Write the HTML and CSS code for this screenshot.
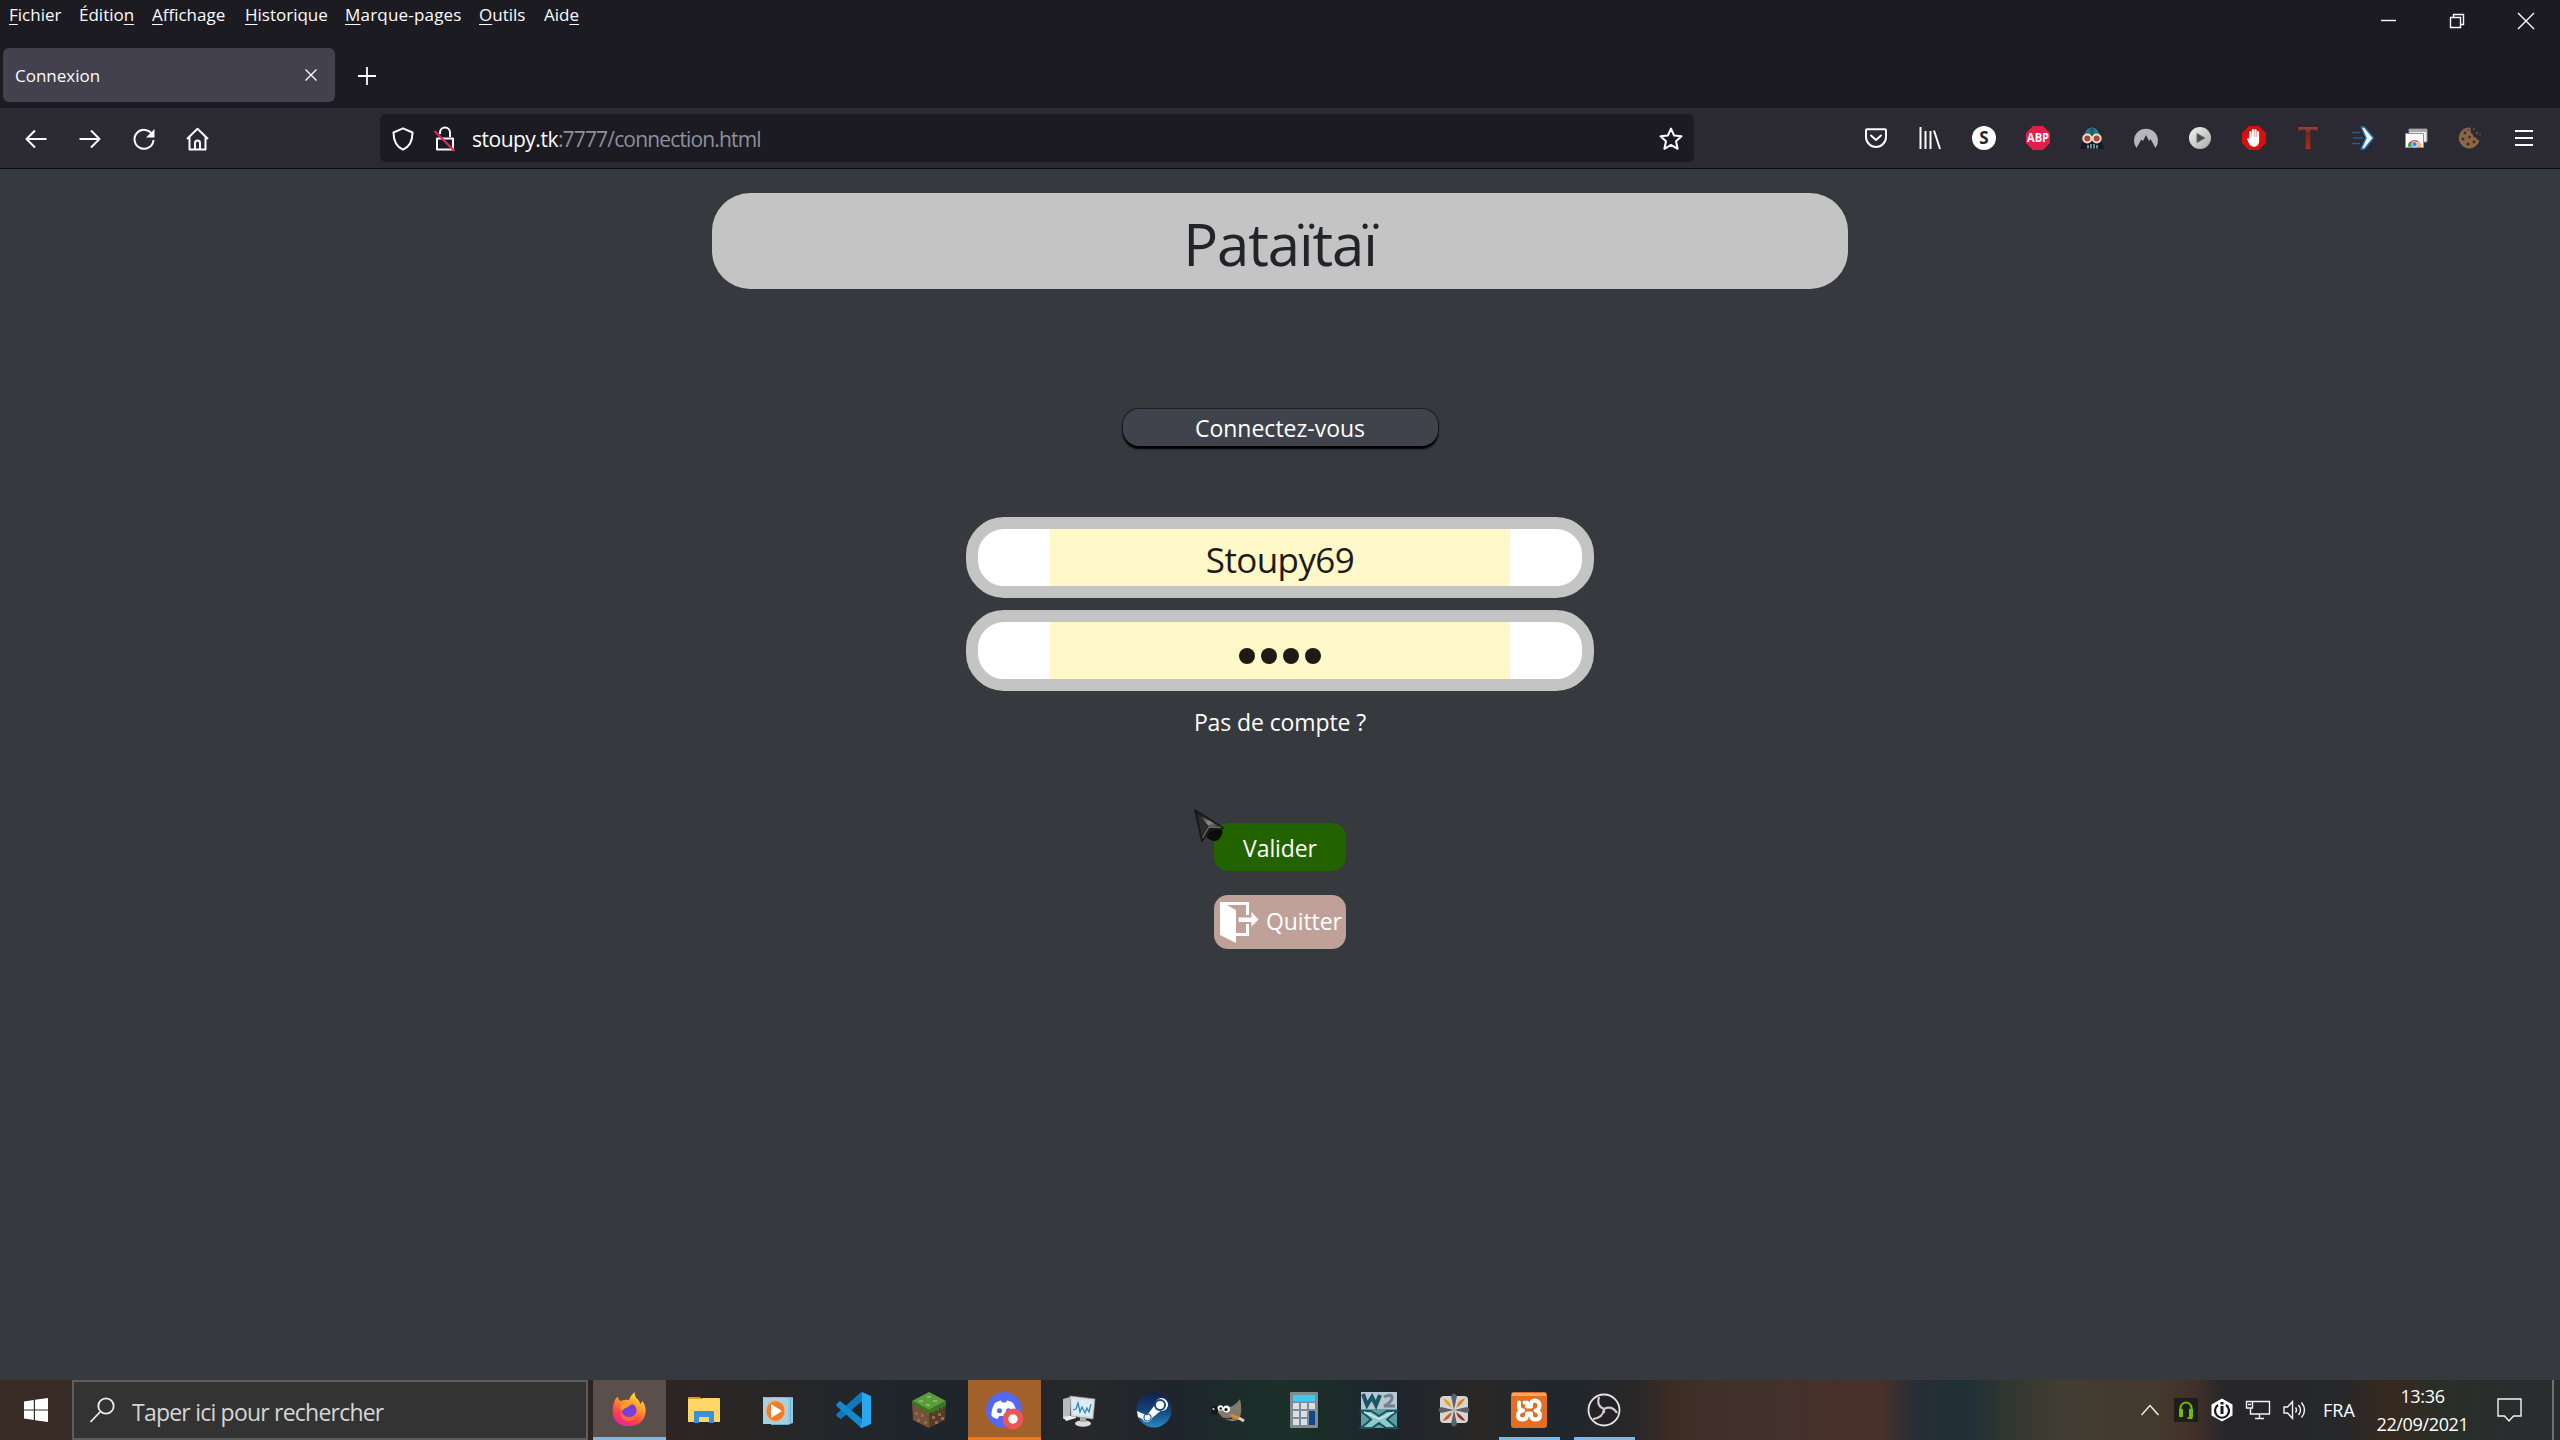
FILE: index.html
```html
<!DOCTYPE html>
<html lang="fr">
<head>
<meta charset="utf-8">
<title>Connexion</title>
<link rel="stylesheet" href="styles.css">
</head>
<body>
<div class="desktop">
  <header class="titlebar">
    <div class="title-row">
      <nav class="menubar">
        <span><u>F</u>ichier</span><span>Éditio<u>n</u></span><span><u>A</u>ffichage</span><span><u>H</u>istorique</span><span class="wide"><u>M</u>arque-pages</span><span><u>O</u>utils</span><span>Aid<u>e</u></span>
      </nav>
      <div class="window-controls">
        <svg width="18" height="18" viewBox="0 0 18 18"><path d="M2 8.500h15"/></svg>
        <svg width="18" height="18" viewBox="0 0 18 18"><path d="M2.500 5.500h10v10h-10zM5.500 5.500v-3h10v10h-3"/></svg>
        <svg width="18" height="18" viewBox="0 0 18 18"><path d="M1 1l16 16M17 1L1 17"/></svg>
      </div>
    </div>
    <div class="tab-row">
      <div class="tab"><span>Connexion</span><svg width="14" height="14" viewBox="0 0 14 14"><path d="M1.500 1.500l11 11M12.500 1.500l-11 11"/></svg></div>
      <svg class="new-tab" width="20" height="20" viewBox="0 0 20 20"><path d="M10 1v18M1 10h18"/></svg>
    </div>
  </header>

  <div class="toolbar">
    <div class="nav-buttons">
      <svg viewBox="0 0 24 24"><path d="M22.500 12H2.500M11 3.500L2.500 12l8.500 8.500"/></svg>
      <svg viewBox="0 0 24 24"><path d="M1.500 12h20M13 3.500l8.500 8.500-8.500 8.500"/></svg>
      <svg viewBox="0 0 24 24"><path d="M20.500 8A9.500 9.500 0 1 0 21.500 13"/><path d="M22.500 2v8.500H14z" fill="#fbfbfe" stroke="none"/></svg>
      <svg viewBox="0 0 24 24"><path d="M1 12L11.500 1.800 22 12M3.500 10v12.500h16V10M9 22v-6a2.500 2.500 0 0 1 5 0v6"/></svg>
    </div>
    <div class="urlbar">
      <svg class="shield" viewBox="0 0 24 24"><path d="M12 1.300L21.500 5.500c0 8-2.500 14-9.500 17.200C5 19.500 2.500 13.500 2.500 5.500z"/></svg>
      <svg class="lock" viewBox="0 0 24 24"><path d="M7 7V5.500a5 5 0 0 1 10 0V10M4 11.500h16v11H4z"/><path d="M1.500 4l20 20" stroke="#e22850" stroke-width="2.200"/></svg>
      <span class="url"><b>stoupy.tk</b>:7777/connection.html</span>
      <svg class="star" viewBox="0 0 24 24"><path d="M12 1.600l3.100 6.900 7.400.8-5.500 5 1.600 7.500-6.600-3.900-6.600 3.900L7 14.300l-5.500-5 7.400-.8z"/></svg>
    </div>
    <div class="extensions">
      <svg viewBox="0 0 24 24"><path d="M3 3.200h18q1 0 1 1V11a10 10 0 0 1-20 0V4.200q0-1 1-1zM7 9.500l5 4.500 5-4.500" stroke-linecap="round"/></svg>
      <svg viewBox="0 0 24 24"><path d="M2.500 1v22M7.500 5v18M12.500 5v18M16 4.500l6 18.500"/></svg>
      <svg viewBox="0 0 24 24"><circle cx="12" cy="12" r="12" fill="#fff" stroke="none"/><text x="12" y="17.800" class="glyph-s">S</text></svg>
      <svg viewBox="0 0 24 24"><path d="M7 0h10l7 7v10l-7 7H7l-7-7V7z" fill="#e41e4a" stroke="none"/><text x="12" y="16.200" class="glyph-abp" textLength="22" lengthAdjust="spacingAndGlyphs">ABP</text></svg>
      <svg viewBox="0 0 24 24" stroke="none"><path d="M4 10Q5 1 12 1t8 9l4 13H0z" fill="#151b24" stroke="none"/><path d="M4 13Q4 1 12 1.500q8 0 8 11.500l-8 2z" fill="#2b7683" stroke="none"/><path d="M10.500 1h3v9h-3z" fill="#22596a" stroke="none"/><circle cx="7.300" cy="12.500" r="4" fill="#9d4b36" stroke="#f6d8c9"/><circle cx="16.700" cy="12.500" r="4" fill="#9d4b36" stroke="#f6d8c9"/><path d="M8 19v3.500M11 18v4.500M14 18v4.500M17 19v3.500" stroke="#a7d2dc" stroke-width="1.200"/></svg>
      <svg viewBox="0 0 24 24"><path d="M2.500 22A12 12 0 1 1 21.500 22l-5-9-1.500 2-3-6-3 6-1.700-1.500z" fill="#b5b5ba" stroke="none"/></svg>
      <svg viewBox="0 0 24 24"><defs><linearGradient id="silver" x2="1" y2="1"><stop stop-color="#f4f4f4"/><stop offset="1" stop-color="#a5a9a5"/></linearGradient></defs><circle cx="12" cy="12" r="11" fill="url(#silver)" stroke="none"/><path d="M9 7.500l8 4.500-8 4.500z" fill="#474947" stroke="#6c6e6c" stroke-width="1"/></svg>
      <svg viewBox="0 0 24 24"><path d="M7 0h10l7 7v10l-7 7H7l-7-7V7z" fill="#d60f0f" stroke="none"/><path d="M8.500 13V6M11 12V4.200M13.500 12V4.200M16 13V6" stroke="#fff" stroke-width="2.200" stroke-linecap="round"/><path d="M7.400 11h9.700v4.500q-.5 5-4.500 5.300-4 0-5.600-3.300l-2-4.500q1-1.500 2.400 0z" fill="#fff" stroke="none"/></svg>
      <svg viewBox="0 0 24 24"><defs><linearGradient id="rust" x2="0" y2="1"><stop stop-color="#8a4a44"/><stop offset=".3" stop-color="#7c241a"/><stop offset="1" stop-color="#a8301c"/></linearGradient></defs><path d="M2 4V2h20v2M12 2v20" stroke="#421e20" stroke-width="4.500"/><path d="M2.500 5V1h19v4h-1.300l-.7-1.300h-5.200V22l.7 1H9l.7-1V3.700H4.500L3.700 5z" fill="url(#rust)" stroke="none"/></svg>
      <svg viewBox="0 0 24 24"><path d="M2 6.500h8M3 12h10M2 17.500h8" stroke="#255f91" stroke-width="1.500"/><path d="M11 1h3.500L23.500 12l-9 11H11l5-11z" fill="#e8f5ff" stroke="#266ba6" stroke-width="1.500"/></svg>
      <svg viewBox="0 0 24 24"><path d="M5 3h18v13H5z" fill="#eee" stroke="#8a8d90" stroke-width="1"/><path d="M5 3h18v3H5z" fill="#aaa" stroke="none"/><path d="M1.500 7.500h18v14h-18z" fill="#fff" stroke="#929292" stroke-width="1"/><path d="M4 20.500a6.500 6.500 0 0 1 13 0z" fill="#e2453a" stroke="none"/><path d="M4 20.500q0-3 1.500-5l3.500 5z" fill="#28a65a" stroke="none"/><path d="M12 16h4l1 4.500h-5z" fill="#f8c33d" stroke="none"/><circle cx="10.500" cy="18.200" r="2.700" fill="#3e83ed" stroke="#fff" stroke-width=".8"/></svg>
      <svg viewBox="0 0 24 24"><path d="M12.500 1.500A10.500 10.500 0 1 0 21.500 14q-3 .5-3.500-2.500-3 .5-3-3-3-1-2.500-7z" fill="#8a6847" stroke="none"/><g fill="#402c1d" stroke="none"><circle cx="7" cy="7" r="1.400"/><circle cx="11.500" cy="11" r="1.300"/><circle cx="5" cy="13" r="1.500"/><circle cx="10" cy="18" r="1.600"/><circle cx="16" cy="16" r="1.400"/><circle cx="10" cy="4" r=".8"/></g><g fill="#6c5239" stroke="none"><circle cx="16" cy="3" r="1"/><circle cx="19" cy="7" r="1.200"/><circle cx="22" cy="8.500" r=".9"/></g></svg>
      <svg viewBox="0 0 24 24"><path d="M3 5h18M3 12h18M3 19h18"/></svg>
    </div>
  </div>

  <main class="page">
    <h1 class="brand">Pataïtaï</h1>
    <div class="login-label">Connectez-vous</div>
    <form class="login">
      <div class="field"><div class="field-value">Stoupy69</div></div>
      <div class="field"><div class="field-value dots"><i></i><i></i><i></i><i></i></div></div>
      <a class="signup">Pas de compte ?</a>
      <div class="button submit">Valider
        <svg class="pointer" width="36" height="42" viewBox="0 0 36 42"><defs><linearGradient id="blade" x1="0" y1="0" x2=".8" y2="1"><stop offset=".2" stop-color="#222"/><stop offset=".65" stop-color="#8c8c8c"/><stop offset="1" stop-color="#333"/></linearGradient></defs><path d="M16 25l13-2q3 4 0 8-2 5-7 5-5-1-7-4z" fill="#0b0d0b"/><path d="M3 5L31 23 18 25 10 36z" fill="#191919" stroke="#191a1b" stroke-width="2" stroke-linejoin="round"/><path d="M5 8l24 14.500-12-1z" fill="url(#blade)"/><path d="M5 8l12 14-6.500 12z" fill="#2c2c2c"/><path d="M10.500 33L17 22l12 .5" fill="none" stroke="#666" stroke-width="1.300"/></svg>
      </div>
      <div class="button quit">
        <svg width="40" height="42" viewBox="0 0 40 42"><path d="M0 1h29v13h-3V4H7l9 5v23h10v-9h3v12H16v7L0 34z" fill="#fff"/><path d="M18 16h13v-6l8 8.500-8 8v-5H18z" fill="#fff" stroke="#c0a199" stroke-width="1"/></svg>
        <span>Quitter</span>
      </div>
    </form>
  </main>

  <footer class="taskbar">
    <div class="start"><svg width="24" height="24" viewBox="0 0 24 24" fill="#fff"><path d="M0 3.400L9.800 2v9.400H0zM11 1.800L24 0v11.400H11zM0 12.600h9.800V22L0 20.600zM11 12.600h13V24l-13-1.800z"/></svg></div>
    <div class="search">
      <svg width="26" height="26" viewBox="0 0 26 26"><circle cx="16" cy="9" r="7.700"/><path d="M10.500 14.500L.5 25"/></svg>
      <span>Taper ici pour rechercher</span>
    </div>
    <div class="apps">
      <div class="app active"><svg viewBox="0 0 36 36"><defs><linearGradient id="fire" x1=".8" y1="0" x2=".3" y2="1"><stop stop-color="#ffe94a"/><stop offset=".4" stop-color="#ff9a28"/><stop offset=".75" stop-color="#ff3c4e"/><stop offset="1" stop-color="#ea24a5"/></linearGradient></defs><path d="M4 8q1-3 3-3 0 3 3 4 4-2 8-1 2-5 5.500-8 0 5 4 8l2 4 2-3q4 6 3 12-2 12-15 13Q5 35 2 23 1 14 4 8z" fill="url(#fire)"/><circle cx="18" cy="18.500" r="7.500" fill="#7a3fda"/><path d="M12 12q8-5 13 1-5-2-8 2-4 1-6 4l-2-4z" fill="#ff9b2e"/><path d="M10 17q1 8 8 8 5 0 8-5-1 10-10 9-8-2-6-12z" fill="#ff6a32"/></svg></div>
      <div class="app"><svg viewBox="0 0 36 36"><path d="M2 6q0-1 1-1h11l3 4H2z" fill="#dba017"/><path d="M2 7h12l3-1h16q1 0 1 1v23H2z" fill="#ffd667"/><path d="M8 31V20q0-1 1-1h18q1 0 1 1v11h-5v-6H13v6z" fill="#3a8fd8"/></svg></div>
      <div class="app"><svg viewBox="0 0 36 36"><path d="M10 5h22v26l-5 2H10z" fill="#6cb3d0"/><path d="M28 6v26M31 6v25" stroke="#b9e0ef" stroke-width="1"/><path d="M2 5l25 1v26H2z" fill="#a7d1e1"/><ellipse cx="14.500" cy="19" rx="9.500" ry="10.300" fill="#ee7d2c" stroke="#f8b681" stroke-width="1"/><path d="M10 12l11 7-11 7z" fill="#fff"/></svg></div>
      <div class="app"><svg viewBox="0 0 36 36"><path d="M26 0v9L5 27 .5 24V22L24 1z" fill="#0c79be"/><path d="M.5 14V12L4 9l22 18v9L23 34z" fill="#1489cc"/><path d="M26 0l9 4v28l-9 4-2-1 2-4z" fill="#2aa6ef"/></svg></div>
      <div class="app"><svg viewBox="0 0 36 36"><path d="M1 10l17 8v18L2 28z" fill="#785139"/><path d="M18 18l17-8-1 18-16 8z" fill="#573a28"/><path d="M18 0l17 9-17 9L1 9z" fill="#5c9c3c"/><path d="M1 9l17 9 17-9v5l-3 1v2l-4-1v3l-4-1v3l-3-1-3 2-3-3-3 1v-3l-4 1v-3l-4 0v-2l-3-1z" fill="#3b7528"/><path d="M4 20h3v3H4zm6 2h3v3h-3zm-4 5h3v3H6zm7 2h3v3h-3zm8-5h3v3h-3zm6-3h3v3h-3zm-3 8h3v3h-3zm6-4h3v3h-3z" fill="#93694b"/><path d="M8 8h4v2H8zm8-4h4v2h-4zm6 4h4v2h-4zm-7 4h4v2h-4z" fill="#82bd59"/></svg></div>
      <div class="app alert"><svg viewBox="0 0 36 36"><circle cx="18" cy="18" r="18" fill="#5568ef"/><path d="M9 11q4-2.500 6-2.500l1 2h4l1-2q3 .2 6 2.500 4 6 3.500 13-3 2.500-6 3l-1.800-3h-9.400l-1.800 3q-3-.5-6-3Q5 17 9 11z" fill="#fff"/><circle cx="13.500" cy="18.800" r="2.500" fill="#5568ef"/><circle cx="22.500" cy="18.800" r="2.500" fill="#5568ef"/><circle cx="27" cy="27" r="10.400" fill="#ec5656"/><circle cx="27" cy="27" r="4.700" fill="#fff"/></svg></div>
      <div class="app"><svg viewBox="0 0 36 36"><path d="M2 7l7-2v20l-7 2z" fill="#b9bcbd"/><path d="M2 25l13-2v3L5 29z" fill="#eee"/><path d="M9 4l25 3-2 20-22-3z" fill="#dedede" stroke="#999" stroke-width=".7"/><path d="M11 7l21 2-2 15-18-2z" fill="#d8effa"/><path d="M12 18l3-1 2-6 2 9 2-5 3 6 2-5 2 4 2-8" fill="none" stroke="#3985ad" stroke-width="1.300"/><ellipse cx="22" cy="31.500" rx="8" ry="3.300" fill="#dadada"/><path d="M19 25h6v5h-6z" fill="#aaa"/></svg></div>
      <div class="app"><svg viewBox="0 0 36 36"><defs><linearGradient id="steam" x2="0" y2="1"><stop stop-color="#13204a"/><stop offset=".5" stop-color="#15437c"/><stop offset="1" stop-color="#288bc1"/></linearGradient></defs><circle cx="18" cy="18" r="17.500" fill="url(#steam)"/><path d="M1 19l10 4.500 8-11a6.500 6.500 0 1 1 5.500 6.500L16 26a5 5 0 0 1-9.500 1L2 25z" fill="#fff"/><circle cx="24" cy="13" r="5" fill="#fff" stroke="#184678" stroke-width="2"/><circle cx="11.500" cy="25.500" r="3.500" fill="none" stroke="#21649b" stroke-width="1.200"/></svg></div>
      <div class="app"><svg viewBox="0 0 36 36"><path d="M3 16q5-2 9 0 11 0 17-9 3 13-1 20-7 5-16-1z" fill="#827b6d"/><ellipse cx="3.500" cy="18.500" rx="3.500" ry="4.500" fill="#181818"/><circle cx="2.500" cy="17" r="1" fill="#ddd"/><circle cx="9.500" cy="16" r="2.800" fill="#fff"/><circle cx="15.500" cy="17" r="3.500" fill="#fff"/><circle cx="9.700" cy="16.500" r="1.200"/><circle cx="15" cy="17.500" r="1.600"/><path d="M8 24q6 4 13 2" stroke="#38342f" stroke-width="1.500" fill="none"/><path d="M20 23l9 4" stroke="#e58c28" stroke-width="3"/><path d="M28 26l5 3" stroke="#d8d3c9" stroke-width="3"/></svg></div>
      <div class="app"><svg viewBox="0 0 36 36"><path d="M4 1q0-1 1-1h26q1 0 1 1v34q0 1-1 1H5q-1 0-1-1z" fill="#818b93"/><path d="M7 3h22v6.500H7z" fill="#43c9f1"/><path d="M7 11h6v6H7zm8 0h6v6h-6zm8 0h6v6h-6zM7 19h6v6H7zm8 0h6v6h-6zM7 27h6v6H7zm8 0h6v6h-6z" fill="#d9dfe9"/><path d="M23 19h6v14h-6z" fill="#114987"/></svg></div>
      <div class="app"><svg viewBox="0 0 36 36"><path d="M0 0h36v36H0z" fill="#5f9ca5"/><path d="M0 0h36v17H0z" fill="#b4c8d2"/><path d="M2 2l4 11 5-8 4 8 4-10" fill="none" stroke="#1d5464" stroke-width="4"/><path d="M23 5q8-4 8 1 0 4-8 8h11" fill="none" stroke="#777e92" stroke-width="3"/><path d="M0 19h10l8 5 8-5h10l-10 8.500L36 36H25l-7-5-7 5H0l10-8.500z" fill="#8fc9cb" stroke="#19545e" stroke-width="2"/><path d="M3 20l15 7 15-7" fill="none" stroke="#cdeae9" stroke-width="1.500"/></svg></div>
      <div class="app"><svg viewBox="0 0 36 36"><rect x="4" y="4" width="28" height="27" rx="4" fill="#d5d5d5"/><path d="M18 18L15 4q3-5 6 0zM18 18l-3 14q3 5 6 0zM18 18L5 15q-5 3 0 6zM18 18l13-3q5 3 0 6z" fill="#5d6066"/><path d="M16 16Q9 12 7 6q7 2 9 10z" fill="#eaa21e"/><path d="M20 16q7-4 9-10-7 2-9 10z" fill="#d4881c"/><path d="M16 20q-7 4-9 9 7-1 9-9z" fill="#c95c20"/><path d="M20 20q7 4 9 9-7-1-9-9z" fill="#98341f"/></svg></div>
      <div class="app running"><svg viewBox="0 0 36 36"><rect width="36" height="36" rx="3" fill="#e26f22"/><path d="M1 2q0-1 1-1h32q1 0 1 1v2H1z" fill="#f7a66a"/><path d="M8 10.500v4q0 3.500 4 4-5 1-5 5t4.500 4q4 0 4.500-4v-2h4v2q0 4 4.500 4t4.500-4-4.500-5q4-.8 4-5t-4.500-5q-4 0-4 4v2h-4v-4" fill="none" stroke="#fff" stroke-width="4" stroke-linejoin="round" stroke-linecap="round"/><circle cx="13.500" cy="10.500" r="2" fill="#fff"/></svg></div>
      <div class="app running"><svg viewBox="0 0 36 36"><circle cx="18" cy="18" r="15.500" fill="#242224" stroke="#e5e5e5" stroke-width="1.800"/><path d="M18 17Q10 14 13 5M18 17q8-4 13 4M18 17q-1 9-11 10M18 17v4" fill="none" stroke="#ccc" stroke-width="2.200"/></svg></div>
    </div>
    <div class="tray">
      <svg class="chevron" width="18" height="12" viewBox="0 0 18 12"><path d="M.5 11L9 1.500l8.500 9.500"/></svg>
      <svg class="headset" width="24" height="24" viewBox="0 0 24 24"><path d="M0 0h24v24H0z" fill="#1b1e1c" stroke="none"/><path d="M6.500 14v-4a5.500 5.500 0 0 1 11 0v4" stroke="#76b900" stroke-width="2"/><path d="M5 11h4v8H5zM15 11h4v8h-4z" fill="#76b900" stroke="none"/><path d="M17.500 18v2h-4" stroke="#76b900" stroke-width="2"/></svg>
      <svg class="hex" width="24" height="24" viewBox="0 0 24 24"><path d="M12 .5l10.500 6v11L12 23.500l-10.500-6v-11z" fill="#fff" stroke="none"/><path d="M8 7a7 7 0 1 0 8 0" stroke="#16181c" stroke-width="2.200"/><path d="M12 8v8M12 4v2.500" stroke="#16181c" stroke-width="3"/></svg>
      <svg class="network" width="24" height="20" viewBox="0 0 24 20"><path d="M7 1.500h16.500v12.500H4.500V8M13.500 14v4M9 18.500h9M.5 1.500h6V8h-6zM2 4.500h3"/></svg>
      <svg class="volume" width="23" height="20" viewBox="0 0 23 20"><path d="M1 7h3.500L9.500 1.500v17L4.500 13H1zM12.500 7.500q2 2.500 0 5M15.500 5q4 5 0 10M18.500 2.500q6 7.500 0 15"/></svg>
      <span class="lang">FRA</span>
      <div class="clock"><span class="time">13:36</span><span class="date">22/09/2021</span></div>
      <svg class="notice" width="25" height="25" viewBox="0 0 25 25"><path d="M1 1h23v17h-7.500L12 23l-4.500-5H1z"/></svg>
      <i class="peek"></i>
    </div>
  </footer>
</div>
</body>
</html>
```
FILE: styles.css
```css
* { box-sizing: border-box; }
body { margin: 0; background: #36393e; font-family: "Open Sans", "Noto Sans", sans-serif; color: #fff; }
svg { display: block; flex: none; overflow: visible; }
.desktop { width: 2560px; height: 1440px; display: flex; flex-direction: column; overflow: hidden; }

/* Browser chrome */
.titlebar { height: 108px; background: #1c1b22; color: #fbfbfe; font-size: 17px; }
.titlebar svg { fill: none; stroke: #fbfbfe; stroke-width: 1.4; }
.title-row { display: flex; justify-content: space-between; height: 44px; padding: 0 25px 0 9px; }
.menubar { display: grid; grid-template-columns: 70px 73px 93px 100px 134px 65px 60px; line-height: 30px; letter-spacing: 0; white-space: nowrap; }
.menubar .wide { letter-spacing: .2px; }
.menubar u { text-underline-offset: 3px; text-decoration-thickness: 1px; text-decoration-skip-ink: none; }
.window-controls { display: flex; gap: 51px; padding-top: 12px; }
.tab-row { display: flex; align-items: center; height: 64px; padding: 0 3px; gap: 22px; }
.tab { width: 332px; height: 54px; border-radius: 6px; background: #42414d; display: flex; align-items: center; justify-content: space-between; padding: 0 17px 0 12px; margin-top: -2px; }
.titlebar .new-tab { stroke-width: 1.8; }
.toolbar { height: 61px; background: #2b2a33; border-bottom: 1px solid #0c0c0d; display: flex; align-items: center; padding: 0 24px; }
.toolbar svg { width: 24px; height: 24px; fill: none; stroke: #fbfbfe; stroke-width: 2; stroke-linejoin: round; }
.nav-buttons { display: flex; gap: 30px; width: 356px; padding-top: 1px; }
.urlbar { width: 1314px; height: 48px; border-radius: 6px; background: #1c1b22; display: flex; align-items: center; padding: 1px 11px 0; }
.lock { margin: 0 15px 0 18px; }
.url { flex: 1; font-size: 21px; color: #8f8f9d; letter-spacing: -.84px; padding-top: 1px; }
.url b { font-weight: 400; color: #fbfbfe; letter-spacing: -.5px; }
.extensions { display: flex; gap: 30px; margin-left: 170px; }
.glyph-s { font: 700 17px "Open Sans", sans-serif; text-anchor: middle; fill: #22222a; stroke: none; }
.glyph-abp { font: 700 11.5px "Open Sans", sans-serif; text-anchor: middle; fill: #fff; stroke: none; }

/* Login page */
.page { flex: 1; display: flex; flex-direction: column; align-items: center; padding-top: 24px; }
.brand { width: 1136px; height: 96px; margin: 0 0 120px; border-radius: 38px; background: #c4c4c4; color: #212529; font-size: 58px; font-weight: 400; line-height: 102px; letter-spacing: -1.1px; text-align: center; }
.login-label { width: 315px; height: 37px; border-radius: 16px; background: #40434b; box-shadow: 0 3px 2px #000, 0 0 1px 1px #1b1d20; font-size: 23px; line-height: 39px; letter-spacing: 0; text-align: center; margin-bottom: 71px; }
.login { display: flex; flex-direction: column; align-items: center; }
.field { width: 628px; height: 81px; border: 12px solid #c4c4c4; border-radius: 38px; background: #fff; padding: 0 72px; margin-bottom: 12px; }
.field-value { height: 57px; background: #fff8c8; color: #1f1b14; font-size: 35px; line-height: 62px; letter-spacing: -.6px; text-align: center; }
.dots { display: flex; justify-content: center; align-items: center; gap: 6px; padding-top: 11px; }
.dots i { width: 16px; height: 16px; border-radius: 50%; background: #1f1b14; }
.signup { font-size: 23px; line-height: 39px; letter-spacing: -.1px; margin-bottom: 81px; }
.button { width: 132px; border-radius: 14px; font-size: 23px; letter-spacing: -.1px; }
.submit { position: relative; height: 48px; margin-bottom: 24px; background: #226300; text-align: center; line-height: 51px; }
.pointer { position: absolute; left: -22px; top: -18px; filter: blur(.6px); }
.quit { height: 54px; background: #c0a199; display: flex; align-items: center; gap: 6px; padding-left: 6px; }
.quit span { padding-bottom: 3px; }

/* Windows taskbar */
.taskbar { height: 60px; display: flex; background: linear-gradient(90deg, #382b25 0, #382b25 72px, #2d2320 590px, #2c2624 700px, #22262a 850px, #1c242b 1000px, #282829 1080px, #1e252c 1170px, #1c302a 1280px, #1b2c29 1330px, #1e252d 1390px, #2a2827 1480px, #1f262d 1560px, #2a2828 1640px, #3c2c24 1670px, #40332c 1740px, #4a302a 1860px, #4a302a 1880px, #272e35 1915px, #203036 1970px, #33382f 2015px, #423d32 2060px, #44392f 2160px, #412f28 2195px, #27262a 2225px, #27282b 2340px, #36291f 2390px, #292f29 2450px, #2b2c2e 2510px); }
.start { width: 72px; padding: 18px 0 0 24px; }
.search { width: 516px; border: 2px solid #5d5d5d; background: #333; display: flex; align-items: center; padding-left: 16px; gap: 16px; color: #d5d5d5; font-size: 23px; letter-spacing: -.78px; }
.search span { padding-top: 3px; }
.search svg { fill: none; stroke: #eee; stroke-width: 1.8; }
.apps { display: flex; margin-left: 4px; }
.app { width: 75px; display: flex; justify-content: center; padding: 12px 2px 0 0; }
.app svg { width: 36px; height: 36px; }
.active { background: linear-gradient(#76b9ed, #76b9ed) 0 100% / 100% 3px no-repeat, #5b4f4c; }
.active, .alert { border: solid transparent; border-width: 0 1px; background-clip: padding-box; }
.alert { background-image: linear-gradient(#f97613, #f97613); background-position: 0 100%; background-size: 100% 3px; background-repeat: no-repeat; background-color: #a2612b; }
.running { background: linear-gradient(#76b9ed, #76b9ed) 50% 100% / 61px 3px no-repeat; }
.tray { flex: 1; display: flex; align-items: center; padding-left: 499px; font-size: 18px; letter-spacing: -.35px; }
.tray svg { fill: none; stroke: #f3f3f3; stroke-width: 1.4; }
.headset { margin-left: 15px; }
.hex { margin-left: 12px; }
.network { margin-left: 12px; }
.volume { margin-left: 13px; }
.lang { margin-left: 17px; width: 47px; letter-spacing: 0; }
.clock { width: 105px; text-align: center; display: flex; flex-direction: column; line-height: 28px; }
.notice { margin-left: 22px; }
.peek { width: 2px; height: 60px; background: #707070; margin-left: 30px; }
```
